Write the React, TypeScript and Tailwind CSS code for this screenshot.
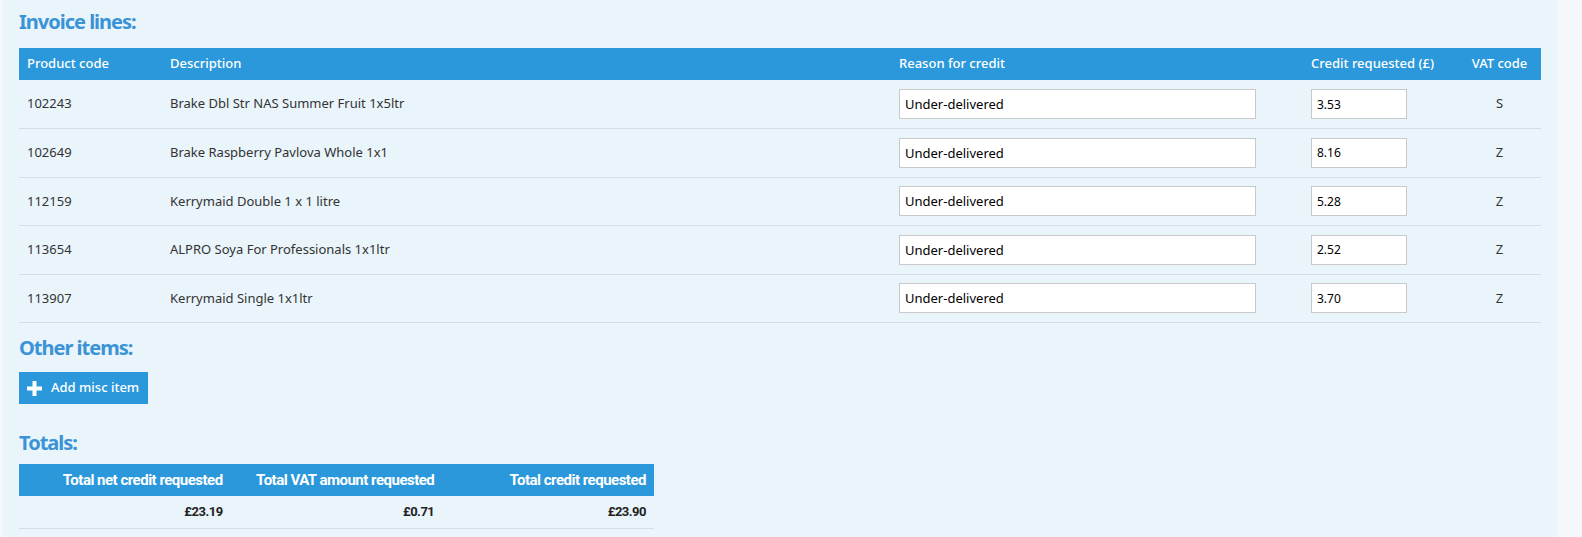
const lines = [
  { code: '102243', desc: 'Brake Dbl Str NAS Summer Fruit 1x5ltr', reason: 'Under-delivered', credit: '3.53', vat: 'S' },
  { code: '102649', desc: 'Brake Raspberry Pavlova Whole 1x1', reason: 'Under-delivered', credit: '8.16', vat: 'Z' },
  { code: '112159', desc: 'Kerrymaid Double 1 x 1 litre', reason: 'Under-delivered', credit: '5.28', vat: 'Z' },
  { code: '113654', desc: 'ALPRO Soya For Professionals 1x1ltr', reason: 'Under-delivered', credit: '2.52', vat: 'Z' },
  { code: '113907', desc: 'Kerrymaid Single 1x1ltr', reason: 'Under-delivered', credit: '3.70', vat: 'Z' },
];

const totals = [
  { label: 'Total net credit requested', value: '£23.19' },
  { label: 'Total VAT amount requested', value: '£0.71' },
  { label: 'Total credit requested', value: '£23.90' },
];

const Heading = ({ children }: { children: React.ReactNode }) => (
  <h2 className="text-[20px] font-bold leading-[24px] tracking-[-1px] text-[#3a93d6]">{children}</h2>
);

const PlusIcon = () => (
  <svg width="15" height="15" viewBox="0 0 15 15" fill="currentColor">
    <rect x="5.5" y="0" width="4" height="15" />
    <rect x="0" y="5.5" width="15" height="4" />
  </svg>
);

export default function App() {
  return (
    <div className="h-[537px] w-[1582px] overflow-hidden bg-[#f4f8fb] pl-[3px] font-['Noto_Sans','Open_Sans',sans-serif] text-[13px] text-[#333]">
      <div className="h-full w-[1554px] bg-[#e9f4fb] pt-[10px] pl-4 pr-4">
        <Heading>Invoice lines:</Heading>
        <table className="mt-[14px] w-[1522px] table-fixed border-collapse">
          <colgroup>
            <col className="w-[143px]" />
            <col className="w-[729px]" />
            <col className="w-[412px]" />
            <col className="w-[155px]" />
            <col className="w-[83px]" />
          </colgroup>
          <thead>
            <tr className="h-8 bg-[#2b98db] text-left text-[13px] text-white">
              <th className="px-2 font-medium">Product code</th>
              <th className="px-2 font-medium">Description</th>
              <th className="px-2 font-medium">Reason for credit</th>
              <th className="px-2 font-medium">Credit requested (£)</th>
              <th className="px-2 text-center font-medium">VAT code</th>
            </tr>
          </thead>
          <tbody>
            {lines.map((l) => (
              <tr key={l.code} className="h-[48.5px] border-b border-[#d3dde4]">
                <td className="px-2">{l.code}</td>
                <td className="px-2">{l.desc}</td>
                <td className="px-2">
                  <input
                    readOnly
                    value={l.reason}
                    className="h-[30px] w-[357px] border border-[#c9c9c9] bg-white px-[5px] text-[13px] text-black outline-none"
                  />
                </td>
                <td className="px-2">
                  <input
                    readOnly
                    value={l.credit}
                    className="h-[30px] w-[96px] border border-[#c9c9c9] bg-white px-[5px] text-[12px] text-black outline-none"
                  />
                </td>
                <td className="px-2 text-center">{l.vat}</td>
              </tr>
            ))}
          </tbody>
        </table>

        <div className="mt-[13px]">
          <Heading>Other items:</Heading>
        </div>
        <button className="mt-[12px] flex h-8 items-center gap-[9px] bg-[#2b98db] pl-[8px] pr-[9px] text-[13px] font-medium text-white">
          <PlusIcon />
          Add misc item
        </button>

        <div className="mt-[27px]">
          <Heading>Totals:</Heading>
        </div>
        <table className="mt-[9px] w-[635px] table-fixed border-collapse font-['Roboto',sans-serif] tracking-[-0.5px]">
          <thead>
            <tr className="h-8 bg-[#2b98db] text-right text-[15px] text-white">
              {totals.map((t) => (
                <th key={t.label} className="px-2 font-bold">
                  {t.label}
                </th>
              ))}
            </tr>
          </thead>
          <tbody>
            <tr className="h-8 border-b border-[#d3dde4] text-right text-[13px] font-bold text-[#222]">
              {totals.map((t) => (
                <td key={t.label} className="px-2">
                  {t.value}
                </td>
              ))}
            </tr>
          </tbody>
        </table>
      </div>
    </div>
  );
}
